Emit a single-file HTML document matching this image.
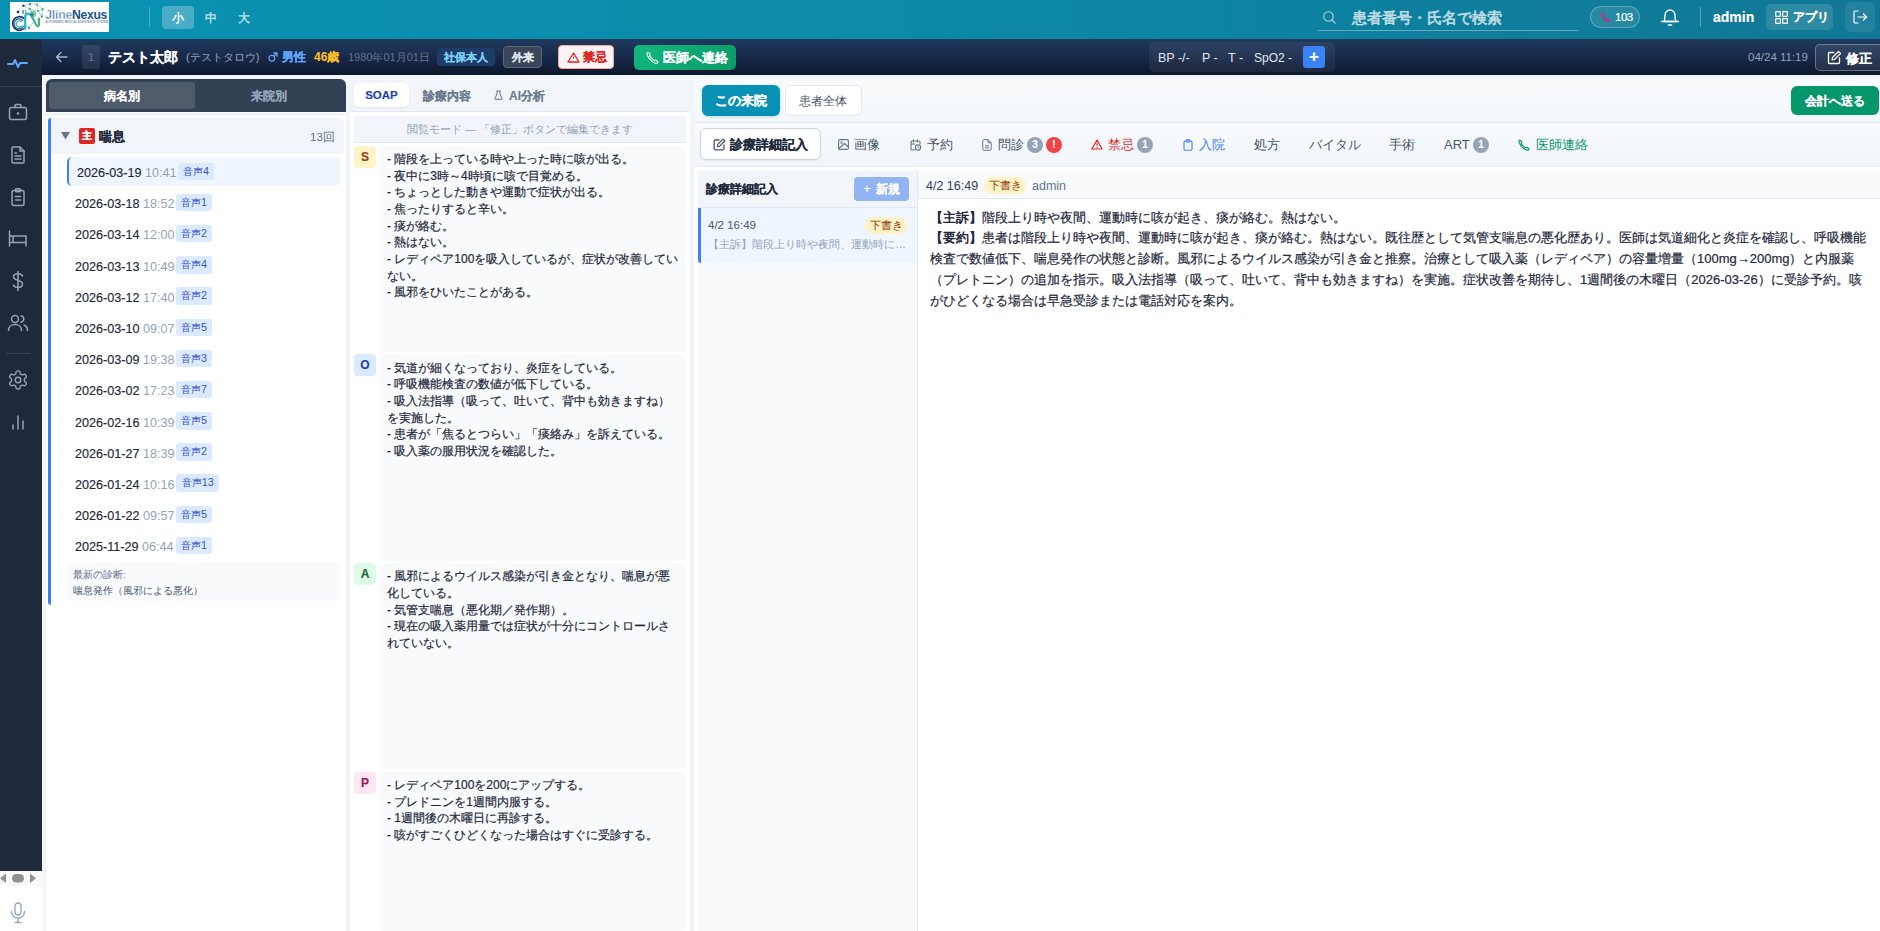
<!DOCTYPE html>
<html><head><meta charset="utf-8">
<style>
*{box-sizing:border-box;margin:0;padding:0}
html,body{width:1880px;height:931px;overflow:hidden;background:#f1f5f9;font-family:"Liberation Sans",sans-serif;color:#1e293b}
.a{position:absolute}
.nw{white-space:nowrap}
svg{display:block}
[style*="font-weight:bold"]{-webkit-text-stroke-width:.12px}
/* header */
#hdr{position:absolute;left:0;top:0;width:1880px;height:39px;background:linear-gradient(90deg,#0a92b2 0%,#0c89a8 50%,#117795 100%)}
.fs{top:6px;height:23px;width:32px;border-radius:4px;color:rgba(255,255,255,.72);font-weight:bold;font-size:12px;line-height:24px;text-align:center}
/* patient bar */
#pbar{position:absolute;left:42px;top:39px;width:1838px;height:36px;background:linear-gradient(180deg,#203a5c 0%,#18294a 50%,#0e182c 100%)}
#side{position:absolute;left:0;top:39px;width:42px;height:832px;background:#1e293b}
.ico{position:absolute;left:0;width:36px;height:24px;display:flex;justify-content:center;align-items:center}
.ico svg{stroke:#94a3b8;fill:none;stroke-width:1.5;stroke-linecap:round;stroke-linejoin:round}
</style></head><body>
<!-- ============ HEADER ============ -->
<div id="hdr">
  <div class="a" style="left:10px;top:2px;width:99px;height:30px;background:#fff">
    <svg width="99" height="30" viewBox="0 0 99 30">
      <defs><linearGradient id="ng" x1="0" y1="0" x2="1" y2="0"><stop offset="0" stop-color="#22b5d0"/><stop offset="1" stop-color="#4cb27a"/></linearGradient>
      <linearGradient id="tg" x1="0" y1="0" x2="1" y2="0"><stop offset="0" stop-color="#3e74ad"/><stop offset="1" stop-color="#7da3c8"/></linearGradient></defs>
      <g fill="none" stroke-linecap="round">
        <path d="M8 10 L13.4 3.8 L20 1.7 L27 2.4 L32.7 7.2 L32 14.5 L28 9 L19.6 6.9 L13.4 3.8 M20 1.7 L19.6 6.9 L23 12 M27 2.4 L28 9 L32.7 7.2 M28 9 L32 14.5 L27 18 M19 25.8 L23 21" stroke="#6fb3a8" stroke-width=".5"/>
        <path d="M14.2 16.6 A6.8 6.8 0 1 0 15.6 24.5" stroke="#1a3a78" stroke-width="1.7"/>
        <path d="M12.6 18.3 A5 5 0 1 0 13.6 24" stroke="#2d5590" stroke-width="1.1"/>
        <path d="M11.2 19.6 A3.1 3.1 0 1 0 11.8 24" stroke="#3bb8b0" stroke-width="1.3"/>
        <path d="M15.2 27 L15.2 15 C15.2 11 19.5 10.5 21.5 14 L26 22.5 C27.5 25.5 29 25 29 22 L29 16.5" stroke="url(#ng)" stroke-width="2.2"/>
        <path d="M13 8 L13 11.5" stroke="#3d5fa8" stroke-width="1.2"/>
        <path d="M15.8 8 L15.8 11.5" stroke="#5ab87a" stroke-width="1.2"/>
      </g>
      <circle cx="23" cy="12" r="3.4" fill="#5ab090" opacity=".7"/><circle cx="22" cy="12.8" r="1.7" fill="#2a6a8a" opacity=".75"/>
      <circle cx="8" cy="10" r="1.3" fill="#0f2a5f"/><circle cx="13.4" cy="3.8" r="1.3" fill="#1f4f86"/><circle cx="20" cy="1.9" r="1" fill="#2f7f9a"/><circle cx="27" cy="2.6" r="1" fill="#4aa87a"/><circle cx="32.7" cy="7.2" r="1.2" fill="#5ab87a"/><circle cx="32" cy="14.5" r="1.1" fill="#3a9a7a"/><circle cx="19" cy="25.8" r="1.1" fill="#1f6f8a"/><circle cx="19.6" cy="6.9" r="1" fill="#2a8aa0"/><circle cx="28" cy="9" r=".9" fill="#4aa88a"/>
      <text x="35.3" y="16.7" font-family="Liberation Sans" font-size="12.2"><tspan fill="url(#tg)" font-weight="bold" stroke="#fff" stroke-width=".35" letter-spacing="-.2">Jline</tspan><tspan fill="#1d4f91" font-weight="bold" letter-spacing="-.35">Nexus</tspan></text>
      <text x="35.5" y="20.9" font-family="Liberation Sans" font-size="3.3" font-weight="bold" fill="#5a78a0" opacity=".8" textLength="62.5" lengthAdjust="spacingAndGlyphs">AI-POWERED MEDICAL ASSISTANCE SYSTEM</text>
    </svg>
  </div>
  <div class="a" style="left:149px;top:7px;width:1px;height:20px;background:rgba(255,255,255,.28)"></div>
  <div class="a fs" style="left:162px;background:rgba(255,255,255,.25);color:#fff">小</div>
  <div class="a fs" style="left:195px">中</div>
  <div class="a fs" style="left:228px">大</div>
  <!-- search -->
  <svg class="a" style="left:1322px;top:10px" width="15" height="15" viewBox="0 0 15 15"><circle cx="6.5" cy="6.5" r="4.8" fill="none" stroke="rgba(255,255,255,.65)" stroke-width="1.1"/><path d="M10 10 L13.2 13.2" stroke="rgba(255,255,255,.65)" stroke-width="1.2" stroke-linecap="round"/></svg>
  <div class="a nw" style="left:1352px;top:7.5px;font-size:15px;line-height:20px;color:rgba(255,255,255,.5);font-weight:bold">患者番号・氏名で検索</div>
  <div class="a" style="left:1318px;top:30px;width:260px;height:1px;background:rgba(255,255,255,.35)"></div>
  <!-- pill -->
  <div class="a" style="left:1590px;top:6px;width:50px;height:22px;border-radius:11px;background:rgba(255,255,255,.1);border:1px solid rgba(255,255,255,.25)"></div>
  <svg class="a" style="left:1600px;top:12px" width="12" height="11" viewBox="0 0 12 11"><path d="M1.5 1.5 C1 5 5 9.5 10 10 L11 8.5 L8.5 6.8 L7.3 7.6 C5.5 6.8 4.2 5.5 3.5 3.8 L4.3 2.6 L2.8 .5 Z" fill="#db2777"/></svg>
  <div class="a nw" style="left:1615px;top:8px;font-size:11.5px;line-height:18px;color:#fff;letter-spacing:-.5px;-webkit-text-stroke:.2px #fff">103</div>
  <!-- bell -->
  <svg class="a" style="left:1660px;top:7px" width="20" height="20" viewBox="0 0 20 20"><path d="M4 14.5 C5 13 5 11 5 8.5 C5 5.5 7 3 10 3 C13 3 15 5.5 15 8.5 C15 11 15 13 16 14.5 Z" fill="none" stroke="#fff" stroke-width="1.4" stroke-linejoin="round"/><path d="M1.5 14.5 L18.5 14.5" stroke="#fff" stroke-width="1.4" stroke-linecap="round"/><path d="M8.5 18 L11.5 18" stroke="#fff" stroke-width="1.6" stroke-linecap="round"/></svg>
  <div class="a" style="left:1700px;top:7px;width:1px;height:20px;background:rgba(255,255,255,.3)"></div>
  <div class="a nw" style="left:1713px;top:7px;font-size:14px;line-height:20px;color:#fff;font-weight:bold">admin</div>
  <div class="a" style="left:1766px;top:4px;width:67px;height:26px;border-radius:5px;background:rgba(255,255,255,.13)"></div>
  <svg class="a" style="left:1775px;top:11px" width="13" height="13" viewBox="0 0 13 13"><g fill="none" stroke="#fff" stroke-width="1.2"><rect x=".7" y=".7" width="4.6" height="4.6" rx=".3"/><rect x="7.7" y=".7" width="4.6" height="4.6" rx=".3"/><rect x=".7" y="7.7" width="4.6" height="4.6" rx=".3"/><rect x="7.7" y="7.7" width="4.6" height="4.6" rx=".3"/></g></svg>
  <div class="a nw" style="left:1793px;top:8px;font-size:11.5px;line-height:18px;color:#fff;font-weight:bold">アプリ</div>
  <div class="a" style="left:1845px;top:2px;width:30px;height:30px;border-radius:5px;background:rgba(255,255,255,.08)"></div>
  <svg class="a" style="left:1853px;top:10px" width="15" height="14" viewBox="0 0 15 14"><path d="M5 1 L2 1 C1.4 1 1 1.4 1 2 L1 12 C1 12.6 1.4 13 2 13 L5 13" fill="none" stroke="#fff" stroke-width="1.2" stroke-linecap="round"/><path d="M5 7 L13.5 7 M10.5 4 L13.5 7 L10.5 10" fill="none" stroke="#fff" stroke-width="1.2" stroke-linecap="round" stroke-linejoin="round"/></svg>
</div>

<!-- ============ SIDEBAR ============ -->
<div id="side">
  <div class="ico" style="top:11px"><svg width="22" height="12" viewBox="0 0 22 12" style="stroke:#60a5fa;stroke-width:2"><path d="M1 8 L6 8 L8 4 L11 11 L13 7 L20 7"/></svg></div>
  <div class="a" style="left:0;top:47px;width:42px;height:1px;background:#334155"></div>
  <div class="ico" style="top:61px"><svg width="20" height="20" viewBox="0 0 20 20"><rect x="1.5" y="5.5" width="17" height="12" rx="2"/><path d="M7 5.5 L7 3.5 C7 2.9 7.4 2.5 8 2.5 L12 2.5 C12.6 2.5 13 2.9 13 3.5 L13 5.5"/><circle cx="10" cy="11.5" r=".6" style="fill:#94a3b8"/></svg></div>
  <div class="ico" style="top:104px"><svg width="20" height="20" viewBox="0 0 20 20"><path d="M4.5 2 L12 2 L16 6 L16 17 C16 17.6 15.6 18 15 18 L5 18 C4.4 18 4 17.6 4 17 L4 2.5 Z"/><path d="M12 2 L12 6 L16 6"/><path d="M7 11 L13 11 M7 14 L13 14 M7 8 L8.5 8"/></svg></div>
  <div class="ico" style="top:146px"><svg width="20" height="20" viewBox="0 0 20 20"><rect x="4" y="3.5" width="12" height="15" rx="2"/><rect x="7.5" y="1.8" width="5" height="3" rx=".8"/><path d="M7.5 9.5 L12.5 9.5 M7.5 13 L12.5 13"/></svg></div>
  <div class="ico" style="top:188px"><svg width="20" height="18" viewBox="0 0 20 18"><path d="M1.5 1 L1.5 16 M1.5 6 L18 6 L18 16 M1.5 12.5 L18 12.5 M5 6 L5 12.5"/></svg></div>
  <div class="ico" style="top:230px"><svg width="14" height="22" viewBox="0 0 14 22"><path d="M7 1.5 L7 20.5 M11.5 6 C11 4.5 9.5 3.8 7 3.8 C4 3.8 2.5 5 2.5 7 C2.5 11 11.5 9.5 11.5 14 C11.5 16.2 9.8 17.5 7 17.5 C4.5 17.5 3 16.8 2.5 15"/></svg></div>
  <div class="ico" style="top:272px"><svg width="22" height="18" viewBox="0 0 22 18"><circle cx="8" cy="5" r="3.5"/><path d="M1.5 16.5 C1.5 12.5 4.5 10.5 8 10.5 C11.5 10.5 14.5 12.5 14.5 16.5"/><path d="M14 1.8 C15.8 2.3 16.8 3.6 16.8 5 C16.8 6.4 15.8 7.7 14 8.2 M17 11 C19 11.8 20.5 13.5 20.5 16.5"/></svg></div>
  <div class="a" style="left:6px;top:314px;width:24px;height:1px;background:#334155"></div>
  <div class="ico" style="top:329px"><svg width="22" height="22" viewBox="0 0 24 24"><path d="M12.22 2h-.44a2 2 0 0 0-2 2v.18a2 2 0 0 1-1 1.73l-.43.25a2 2 0 0 1-2 0l-.15-.08a2 2 0 0 0-2.73.73l-.22.38a2 2 0 0 0 .73 2.73l.15.1a2 2 0 0 1 1 1.72v.51a2 2 0 0 1-1 1.74l-.15.09a2 2 0 0 0-.73 2.73l.22.38a2 2 0 0 0 2.73.73l.15-.08a2 2 0 0 1 2 0l.43.25a2 2 0 0 1 1 1.73V20a2 2 0 0 0 2 2h.44a2 2 0 0 0 2-2v-.18a2 2 0 0 1 1-1.73l.43-.25a2 2 0 0 1 2 0l.15.08a2 2 0 0 0 2.73-.73l.22-.39a2 2 0 0 0-.73-2.73l-.15-.08a2 2 0 0 1-1-1.74v-.5a2 2 0 0 1 1-1.74l.15-.09a2 2 0 0 0 .73-2.73l-.22-.38a2 2 0 0 0-2.73-.73l-.15.08a2 2 0 0 1-2 0l-.43-.25a2 2 0 0 1-1-1.73V4a2 2 0 0 0-2-2z"/><circle cx="12" cy="12" r="3"/></svg></div>
  <div class="ico" style="top:371px"><svg width="16" height="16" viewBox="0 0 16 16"><path d="M3 15 L3 11 M8 15 L8 2 M13 15 L13 7"/></svg></div>
</div>
<!-- scrollbar + mic -->
<div class="a" style="left:0;top:871px;width:42px;height:15px;background:#f8f8f8"></div>
<svg class="a" style="left:0;top:873px" width="42" height="11" viewBox="0 0 42 11"><path d="M6 .5 L6 10 L0 5.3 Z" fill="#8f8f8f"/><rect x="12" y="1" width="12" height="8.5" rx="4.25" fill="#8f8f8f"/><path d="M30 .5 L30 10 L36 5.3 Z" fill="#8f8f8f"/></svg>
<div class="a" style="left:0;top:886px;width:42px;height:45px;background:#fff"></div>
<svg class="a" style="left:10px;top:902px" width="16" height="22" viewBox="0 0 16 22"><rect x="5" y="1" width="6" height="12" rx="3" fill="none" stroke="#94a3b8" stroke-width="1.3"/><path d="M1.5 9.5 C1.5 13.5 4.5 16 8 16 C11.5 16 14.5 13.5 14.5 9.5 M8 16 L8 20.5 M5 20.5 L11 20.5" fill="none" stroke="#94a3b8" stroke-width="1.3" stroke-linecap="round"/></svg>

<!-- ============ PATIENT BAR ============ -->
<div id="pbar">
  <svg class="a" style="left:13px;top:12px" width="13" height="12" viewBox="0 0 13 12"><path d="M12 6 L1.5 6 M6 1.5 L1.5 6 L6 10.5" fill="none" stroke="#a8b4c6" stroke-width="1.4" stroke-linecap="round" stroke-linejoin="round"/></svg>
  <div class="a" style="left:40px;top:6px;width:18px;height:24px;border-radius:3px;background:rgba(255,255,255,.09);color:#64748b;font-size:11px;line-height:24px;text-align:center">1</div>
  <div class="a nw" style="left:66px;top:8px;font-size:14px;line-height:20px;color:#fff;font-weight:bold">テスト太郎</div>
  <div class="a nw" style="left:144px;top:10px;font-size:11px;line-height:16px;color:#94a3b8">(テストタロウ)</div>
  <svg class="a" style="left:226px;top:13px" width="10" height="10" viewBox="0 0 10 10"><circle cx="3.8" cy="6.2" r="2.9" fill="none" stroke="#60a5fa" stroke-width="1.3"/><path d="M5.9 4.1 L9 1 M5.8 1 L9 1 L9 4.2" fill="none" stroke="#60a5fa" stroke-width="1.3" stroke-linecap="round" stroke-linejoin="round"/></svg><div class="a nw" style="left:240px;top:10px;font-size:12px;line-height:16px;color:#60a5fa;font-weight:bold">男性</div>
  <div class="a nw" style="left:272px;top:10px;font-size:12px;line-height:16px;color:#fbbf24;font-weight:bold">46歳</div>
  <div class="a nw" style="left:306px;top:11px;font-size:11px;line-height:15px;color:#64748b">1980年01月01日</div>
  <div class="a nw" style="left:395px;top:9px;width:58px;height:18px;border-radius:4px;background:#1e3d66;color:#7dd3fc;font-size:11px;line-height:18px;text-align:center;font-weight:bold">社保本人</div>
  <div class="a nw" style="left:461px;top:7px;width:39px;height:22px;border-radius:4px;background:#3a475a;border:1px solid #5b6678;color:#e2e8f0;font-size:11px;line-height:20px;text-align:center;font-weight:bold">外来</div>
  <div class="a" style="left:516px;top:6px;width:56px;height:24px;border-radius:4px;background:#fef2f2;border:1px solid #fca5a5"></div>
  <svg class="a" style="left:525px;top:13px" width="13" height="11" viewBox="0 0 13 11"><path d="M6.5 1 L12 10 L1 10 Z" fill="none" stroke="#dc2626" stroke-width="1.3" stroke-linejoin="round"/><path d="M6.5 4.5 L6.5 6.5" stroke="#dc2626" stroke-width="1.1"/></svg>
  <div class="a nw" style="left:541px;top:10px;font-size:12px;line-height:16px;color:#dc2626;font-weight:bold">禁忌</div>
  <div class="a" style="left:592px;top:6px;width:102px;height:25px;border-radius:5px;background:linear-gradient(135deg,#12b87f,#0a9a68)"></div>
  <svg class="a" style="left:604px;top:12px" width="13" height="13" viewBox="0 0 13 13"><path d="M2 1.2 C1 1.5 .8 2.8 1.5 4.5 C3 8 5.5 10.5 9 12 C10.5 12.5 11.5 12.3 12 11.2 L10 9 L8.4 9.6 C6.5 8.6 4.6 6.6 3.6 4.8 L4.2 3.2 Z" fill="none" stroke="#fff" stroke-width="1.1" stroke-linejoin="round"/></svg>
  <div class="a nw" style="left:621px;top:10px;font-size:13px;line-height:18px;color:#fff;font-weight:bold">医師へ連絡</div>
  <!-- vitals -->
  <div class="a" style="left:1107px;top:3px;width:186px;height:30px;border-radius:5px;background:rgba(255,255,255,.06)"></div>
  <div class="a nw" style="left:1116px;top:11px;font-size:12.5px;line-height:16px;color:#e2e8f0">BP -/-</div>
  <div class="a nw" style="left:1160px;top:11px;font-size:12.5px;line-height:16px;color:#e2e8f0">P -</div>
  <div class="a nw" style="left:1186px;top:11px;font-size:12.5px;line-height:16px;color:#e2e8f0">T -</div>
  <div class="a nw" style="left:1212px;top:11px;font-size:12px;line-height:16px;color:#e2e8f0">SpO2 -</div>
  <div class="a" style="left:1261px;top:7px;width:22px;height:22px;border-radius:3px;background:#3b82f6;color:#fff;font-size:17px;line-height:21px;text-align:center;font-weight:bold">+</div>
  <div class="a nw" style="left:1706px;top:11px;font-size:11.5px;line-height:15px;color:#94a3b8">04/24 11:19</div>
  <div class="a" style="left:1773px;top:5px;width:70px;height:27px;border-radius:5px;background:rgba(255,255,255,.09);border:1px solid rgba(255,255,255,.3)"></div>
  <svg class="a" style="left:1785px;top:11px" width="15" height="15" viewBox="0 0 15 15"><path d="M7 2.5 L2.5 2.5 C1.9 2.5 1.5 2.9 1.5 3.5 L1.5 12.5 C1.5 13.1 1.9 13.5 2.5 13.5 L11.5 13.5 C12.1 13.5 12.5 13.1 12.5 12.5 L12.5 8" fill="none" stroke="#fff" stroke-width="1.3" stroke-linecap="round"/><path d="M11.5 1.5 L13.5 3.5 L7.5 9.5 L5 10 L5.5 7.5 Z" fill="none" stroke="#fff" stroke-width="1.2" stroke-linejoin="round"/></svg>
  <div class="a nw" style="left:1804px;top:11px;font-size:13px;line-height:18px;color:#fff;font-weight:bold">修正</div>
</div>
<!-- ============ LEFT PANEL ============ -->
<div class="a" style="left:42px;top:75px;width:1px;height:856px;background:#fafbfc"></div>
<div class="a" style="left:46px;top:79px;width:300px;height:33px;background:#334155;border-radius:6px 6px 0 0"></div>
<div class="a" style="left:49px;top:82px;width:146px;height:27px;background:#4f5a6b;border-radius:4px;color:#fff;font-weight:bold;font-size:12px;line-height:29px;text-align:center">病名別</div>
<div class="a" style="left:196px;top:82px;width:146px;height:27px;color:#94a3b8;font-weight:bold;font-size:12px;line-height:29px;text-align:center">来院別</div>
<div class="a" style="left:46px;top:112px;width:300px;height:1px;background:#fff"></div>
<div class="a" style="left:46px;top:116px;width:300px;height:815px;background:#fff"></div>
<div class="a" style="left:48px;top:118px;width:3px;height:487px;background:#3b82f6;border-radius:6px 0 0 6px"></div>
<div class="a" style="left:51px;top:118px;width:293px;height:36px;background:#f1f5f9;border-radius:0 6px 0 0"></div>
<svg class="a" style="left:61px;top:132px" width="9" height="8" viewBox="0 0 9 8"><path d="M0 0 L9 0 L4.5 7.5 Z" fill="#64748b"/></svg>
<div class="a" style="left:79px;top:128px;width:16px;height:16px;background:#dc2626;border-radius:2px;color:#fff;font-size:10px;font-weight:bold;line-height:16px;text-align:center">主</div>
<div class="a nw" style="left:99px;top:128px;font-size:13px;line-height:18px;color:#1e293b;font-weight:bold">喘息</div>
<div class="a nw" style="left:310px;top:129px;font-size:11.5px;line-height:16px;color:#64748b">13回</div>
<div class="a" style="left:67px;top:157px;width:273px;height:28.5px;background:#eff6ff;border-left:2.5px solid #3b82f6;border-radius:5px"></div>
<div class="a nw" style="left:77px;top:164.1px;font-size:12.6px;line-height:18px;color:#1e293b;-webkit-text-stroke:.15px #1e293b">2026-03-19 <span style="color:#94a3b8;-webkit-text-stroke:0">10:41</span></div>
<div class="a nw" style="left:178.3px;top:162.6px;width:35.5px;height:17.5px;background:#dbeafe;border-radius:3px;color:#3a55c9;font-size:9.8px;line-height:17.5px;text-align:center">音声<span style="font-size:10.8px">4</span></div>
<div class="a nw" style="left:75px;top:195.3px;font-size:12.6px;line-height:18px;color:#1e293b;-webkit-text-stroke:.15px #1e293b">2026-03-18 <span style="color:#94a3b8;-webkit-text-stroke:0">18:52</span></div>
<div class="a nw" style="left:176.3px;top:193.8px;width:35.5px;height:17.5px;background:#dbeafe;border-radius:3px;color:#3a55c9;font-size:9.8px;line-height:17.5px;text-align:center">音声<span style="font-size:10.8px">1</span></div>
<div class="a nw" style="left:75px;top:226.4px;font-size:12.6px;line-height:18px;color:#1e293b;-webkit-text-stroke:.15px #1e293b">2026-03-14 <span style="color:#94a3b8;-webkit-text-stroke:0">12:00</span></div>
<div class="a nw" style="left:176.3px;top:224.9px;width:35.5px;height:17.5px;background:#dbeafe;border-radius:3px;color:#3a55c9;font-size:9.8px;line-height:17.5px;text-align:center">音声<span style="font-size:10.8px">2</span></div>
<div class="a nw" style="left:75px;top:257.6px;font-size:12.6px;line-height:18px;color:#1e293b;-webkit-text-stroke:.15px #1e293b">2026-03-13 <span style="color:#94a3b8;-webkit-text-stroke:0">10:49</span></div>
<div class="a nw" style="left:176.3px;top:256.1px;width:35.5px;height:17.5px;background:#dbeafe;border-radius:3px;color:#3a55c9;font-size:9.8px;line-height:17.5px;text-align:center">音声<span style="font-size:10.8px">4</span></div>
<div class="a nw" style="left:75px;top:288.8px;font-size:12.6px;line-height:18px;color:#1e293b;-webkit-text-stroke:.15px #1e293b">2026-03-12 <span style="color:#94a3b8;-webkit-text-stroke:0">17:40</span></div>
<div class="a nw" style="left:176.3px;top:287.3px;width:35.5px;height:17.5px;background:#dbeafe;border-radius:3px;color:#3a55c9;font-size:9.8px;line-height:17.5px;text-align:center">音声<span style="font-size:10.8px">2</span></div>
<div class="a nw" style="left:75px;top:320.0px;font-size:12.6px;line-height:18px;color:#1e293b;-webkit-text-stroke:.15px #1e293b">2026-03-10 <span style="color:#94a3b8;-webkit-text-stroke:0">09:07</span></div>
<div class="a nw" style="left:176.3px;top:318.5px;width:35.5px;height:17.5px;background:#dbeafe;border-radius:3px;color:#3a55c9;font-size:9.8px;line-height:17.5px;text-align:center">音声<span style="font-size:10.8px">5</span></div>
<div class="a nw" style="left:75px;top:351.1px;font-size:12.6px;line-height:18px;color:#1e293b;-webkit-text-stroke:.15px #1e293b">2026-03-09 <span style="color:#94a3b8;-webkit-text-stroke:0">19:38</span></div>
<div class="a nw" style="left:176.3px;top:349.6px;width:35.5px;height:17.5px;background:#dbeafe;border-radius:3px;color:#3a55c9;font-size:9.8px;line-height:17.5px;text-align:center">音声<span style="font-size:10.8px">3</span></div>
<div class="a nw" style="left:75px;top:382.3px;font-size:12.6px;line-height:18px;color:#1e293b;-webkit-text-stroke:.15px #1e293b">2026-03-02 <span style="color:#94a3b8;-webkit-text-stroke:0">17:23</span></div>
<div class="a nw" style="left:176.3px;top:380.8px;width:35.5px;height:17.5px;background:#dbeafe;border-radius:3px;color:#3a55c9;font-size:9.8px;line-height:17.5px;text-align:center">音声<span style="font-size:10.8px">7</span></div>
<div class="a nw" style="left:75px;top:413.5px;font-size:12.6px;line-height:18px;color:#1e293b;-webkit-text-stroke:.15px #1e293b">2026-02-16 <span style="color:#94a3b8;-webkit-text-stroke:0">10:39</span></div>
<div class="a nw" style="left:176.3px;top:412.0px;width:35.5px;height:17.5px;background:#dbeafe;border-radius:3px;color:#3a55c9;font-size:9.8px;line-height:17.5px;text-align:center">音声<span style="font-size:10.8px">5</span></div>
<div class="a nw" style="left:75px;top:444.6px;font-size:12.6px;line-height:18px;color:#1e293b;-webkit-text-stroke:.15px #1e293b">2026-01-27 <span style="color:#94a3b8;-webkit-text-stroke:0">18:39</span></div>
<div class="a nw" style="left:176.3px;top:443.1px;width:35.5px;height:17.5px;background:#dbeafe;border-radius:3px;color:#3a55c9;font-size:9.8px;line-height:17.5px;text-align:center">音声<span style="font-size:10.8px">2</span></div>
<div class="a nw" style="left:75px;top:475.8px;font-size:12.6px;line-height:18px;color:#1e293b;-webkit-text-stroke:.15px #1e293b">2026-01-24 <span style="color:#94a3b8;-webkit-text-stroke:0">10:16</span></div>
<div class="a nw" style="left:176.3px;top:474.3px;width:43px;height:17.5px;background:#dbeafe;border-radius:3px;color:#3a55c9;font-size:9.8px;line-height:17.5px;text-align:center">音声<span style="font-size:10.8px">13</span></div>
<div class="a nw" style="left:75px;top:507.0px;font-size:12.6px;line-height:18px;color:#1e293b;-webkit-text-stroke:.15px #1e293b">2026-01-22 <span style="color:#94a3b8;-webkit-text-stroke:0">09:57</span></div>
<div class="a nw" style="left:176.3px;top:505.5px;width:35.5px;height:17.5px;background:#dbeafe;border-radius:3px;color:#3a55c9;font-size:9.8px;line-height:17.5px;text-align:center">音声<span style="font-size:10.8px">5</span></div>
<div class="a nw" style="left:75px;top:538.1px;font-size:12.6px;line-height:18px;color:#1e293b;-webkit-text-stroke:.15px #1e293b">2025-11-29 <span style="color:#94a3b8;-webkit-text-stroke:0">06:44</span></div>
<div class="a nw" style="left:176.3px;top:536.6px;width:35.5px;height:17.5px;background:#dbeafe;border-radius:3px;color:#3a55c9;font-size:9.8px;line-height:17.5px;text-align:center">音声<span style="font-size:10.8px">1</span></div>
<div class="a" style="left:67px;top:562px;width:273px;height:39px;background:#f8fafc;border-radius:4px"></div>
<div class="a nw" style="left:73px;top:567px;font-size:9.8px;line-height:15px;color:#64748b">最新の診断:</div>
<div class="a nw" style="left:73px;top:582.5px;font-size:9.7px;line-height:15px;color:#475569">喘息発作（風邪による悪化）</div>

<!-- ============ SOAP PANEL ============ -->
<div class="a" style="left:350px;top:79px;width:340px;height:33px;background:#f1f5f9;border-radius:6px 6px 0 0"></div>
<div class="a" style="left:350px;top:111px;width:340px;height:1px;background:#e2e8f0"></div>
<div class="a" style="left:354px;top:83px;width:55px;height:24px;background:#fff;border-radius:5px;box-shadow:0 1px 2px rgba(0,0,0,.08);color:#1e40af;font-weight:bold;font-size:11.5px;line-height:25px;text-align:center">SOAP</div>
<div class="a nw" style="left:423px;top:88px;font-size:12px;line-height:17px;color:#6b7a8f;font-weight:bold">診療内容</div>
<svg class="a" style="left:494px;top:90px" width="9" height="10" viewBox="0 0 9 10"><path d="M3 1 L3 4 L.8 8.6 C.6 9 .8 9.3 1.2 9.3 L7.8 9.3 C8.2 9.3 8.4 9 8.2 8.6 L6 4 L6 1 M2.2 1 L6.8 1" fill="none" stroke="#64748b" stroke-width="1" stroke-linejoin="round"/></svg>
<div class="a nw" style="left:509px;top:88px;font-size:12px;line-height:17px;color:#6b7a8f;font-weight:bold">AI分析</div>
<div class="a" style="left:350px;top:112px;width:340px;height:819px;background:#fff"></div>
<div class="a" style="left:354px;top:116px;width:332px;height:27px;background:#f1f5f9;border-bottom:1px solid #e2e8f0;color:#94a3b8;font-size:11px;line-height:26px;text-align:center">閲覧モード — 「修正」ボタンで編集できます</div>
<div class="a" style="left:354px;top:145.5px;width:22px;height:22px;background:#fef3c7;border-radius:4px;color:#92400e;font-weight:bold;font-size:12px;line-height:22px;text-align:center">S</div>
<div class="a" style="left:380px;top:145.5px;width:306px;height:206.5px;background:#f8fafc;border-radius:5px"></div>
<div class="a nw" style="left:387px;top:150.8px;font-size:12px;line-height:16.7px;color:#1e293b;-webkit-text-stroke:.2px #1e293b">- 階段を上っている時や上った時に咳が出る。<br>- 夜中に3時～4時頃に咳で目覚める。<br>- ちょっとした動きや運動で症状が出る。<br>- 焦ったりすると辛い。<br>- 痰が絡む。<br>- 熱はない。<br>- レディペア100を吸入しているが、症状が改善してい<br>ない。<br>- 風邪をひいたことがある。</div>
<div class="a" style="left:354px;top:354.2px;width:22px;height:22px;background:#dbeafe;border-radius:4px;color:#1e40af;font-weight:bold;font-size:12px;line-height:22px;text-align:center">O</div>
<div class="a" style="left:380px;top:354.2px;width:306px;height:206.5px;background:#f8fafc;border-radius:5px"></div>
<div class="a nw" style="left:387px;top:359.5px;font-size:12px;line-height:16.7px;color:#1e293b;-webkit-text-stroke:.2px #1e293b">- 気道が細くなっており、炎症をしている。<br>- 呼吸機能検査の数値が低下している。<br>- 吸入法指導（吸って、吐いて、背中も効きますね）<br>を実施した。<br>- 患者が「焦るとつらい」「痰絡み」を訴えている。<br>- 吸入薬の服用状況を確認した。</div>
<div class="a" style="left:354px;top:562.9px;width:22px;height:22px;background:#dcfce7;border-radius:4px;color:#166534;font-weight:bold;font-size:12px;line-height:22px;text-align:center">A</div>
<div class="a" style="left:380px;top:562.9px;width:306px;height:206.5px;background:#f8fafc;border-radius:5px"></div>
<div class="a nw" style="left:387px;top:568.2px;font-size:12px;line-height:16.7px;color:#1e293b;-webkit-text-stroke:.2px #1e293b">- 風邪によるウイルス感染が引き金となり、喘息が悪<br>化している。<br>- 気管支喘息（悪化期／発作期）。<br>- 現在の吸入薬用量では症状が十分にコントロールさ<br>れていない。</div>
<div class="a" style="left:354px;top:771.6px;width:22px;height:22px;background:#fce7f3;border-radius:4px;color:#9d174d;font-weight:bold;font-size:12px;line-height:22px;text-align:center">P</div>
<div class="a" style="left:380px;top:771.6px;width:306px;height:159.39999999999998px;background:#f8fafc;border-radius:5px"></div>
<div class="a nw" style="left:387px;top:776.9px;font-size:12px;line-height:16.7px;color:#1e293b;-webkit-text-stroke:.2px #1e293b">- レディペア100を200にアップする。<br>- プレドニンを1週間内服する。<br>- 1週間後の木曜日に再診する。<br>- 咳がすごくひどくなった場合はすぐに受診する。</div>

<!-- ============ RIGHT PANEL ============ -->
<div class="a" style="left:694px;top:79px;width:1186px;height:852px;background:linear-gradient(180deg,#f8fafc 0%,#f1f5f9 90px,#f1f5f9 100%);border-radius:6px 0 0 0"></div>
<div class="a" style="left:702px;top:85px;width:78px;height:31px;background:#0891b2;border-radius:6px;box-shadow:0 1px 3px rgba(8,145,178,.3);color:#fff;font-weight:bold;font-size:12.5px;line-height:33px;text-align:center">この来院</div>
<div class="a" style="left:785px;top:85px;width:76.5px;height:30.5px;background:#fff;border:1px solid #e2e8f0;border-radius:6px;color:#475569;font-size:12px;line-height:30.5px;text-align:center">患者全体</div>
<div class="a" style="left:1791px;top:86px;width:88px;height:29px;background:#059669;border-radius:6px;color:#fff;font-weight:bold;font-size:12px;line-height:31px;text-align:center">会計へ送る</div>
<div class="a" style="left:694px;top:122px;width:1186px;height:1px;background:#e2e8f0"></div>
<div class="a" style="left:694px;top:123px;width:1186px;height:44px;background:linear-gradient(180deg,#f8fafc,#f1f5f9)"></div>
<div class="a" style="left:694px;top:166px;width:1186px;height:1px;background:#e2e8f0"></div>
<!-- tabs -->
<div class="a" style="left:700px;top:128px;width:120.5px;height:32px;background:#fff;border:1px solid #cbd5e1;border-radius:6px;box-shadow:0 1px 2px rgba(0,0,0,.06)"></div>
<svg class="a" style="left:713px;top:138px" width="13" height="13" viewBox="0 0 13 13"><path d="M6 2 L2.2 2 C1.6 2 1.2 2.4 1.2 3 L1.2 10.8 C1.2 11.4 1.6 11.8 2.2 11.8 L10 11.8 C10.6 11.8 11 11.4 11 10.8 L11 7" fill="none" stroke="#475569" stroke-width="1.3" stroke-linecap="round"/><path d="M10 1.2 L11.8 3 L6.5 8.3 L4.3 8.7 L4.7 6.5 Z" fill="none" stroke="#475569" stroke-width="1.2" stroke-linejoin="round"/></svg>
<div class="a nw" style="left:730px;top:136px;font-size:13px;line-height:18px;color:#1e293b;font-weight:bold">診療詳細記入</div>
<svg class="a" style="left:838px;top:139px" width="11" height="11" viewBox="0 0 11 11"><rect x=".6" y=".6" width="9.8" height="9.8" rx="1.2" fill="none" stroke="#64748b" stroke-width="1.1"/><circle cx="3.6" cy="3.6" r="1" fill="none" stroke="#64748b" stroke-width=".9"/><path d="M.8 9.5 L6.5 4.5 L10.4 8" fill="none" stroke="#64748b" stroke-width="1.1"/></svg>
<div class="a nw" style="left:854px;top:136px;font-size:13px;line-height:18px;color:#475569">画像</div>
<svg class="a" style="left:910px;top:139px" width="12" height="12" viewBox="0 0 12 12"><path d="M5 11 L2 11 C1.4 11 1 10.6 1 10 L1 3 C1 2.4 1.4 2 2 2 L9 2 C9.6 2 10 2.4 10 3 L10 5 M3.5 .8 L3.5 3 M7.5 .8 L7.5 3 M1 5 L5 5" fill="none" stroke="#64748b" stroke-width="1.1" stroke-linecap="round"/><circle cx="8" cy="8.5" r="2.6" fill="none" stroke="#64748b" stroke-width="1.1"/><path d="M8 7.3 L8 8.6 L8.9 9.2" fill="none" stroke="#64748b" stroke-width=".9"/></svg>
<div class="a nw" style="left:927px;top:136px;font-size:13px;line-height:18px;color:#475569">予約</div>
<svg class="a" style="left:982px;top:139px" width="10" height="12" viewBox="0 0 10 12"><path d="M6.2 .7 L1.8 .7 C1.2 .7 .8 1.1 .8 1.7 L.8 10.3 C.8 10.9 1.2 11.3 1.8 11.3 L8.2 11.3 C8.8 11.3 9.2 10.9 9.2 10.3 L9.2 3.7 Z M6 .8 L6 3.8 L9 3.8 M3 6.8 L7 6.8 M3 8.8 L7 8.8" fill="none" stroke="#64748b" stroke-width="1" stroke-linejoin="round"/></svg>
<div class="a nw" style="left:998px;top:136px;font-size:13px;line-height:18px;color:#475569">問診</div>
<div class="a" style="left:1027px;top:136.5px;width:16px;height:16px;border-radius:8px;background:#94a3b8;color:#fff;font-size:10px;line-height:16px;text-align:center;font-weight:bold">3</div>
<div class="a" style="left:1046px;top:136.5px;width:16px;height:16px;border-radius:8px;background:#ef4444;color:#fff;font-size:10px;line-height:16px;text-align:center;font-weight:bold">!</div>
<svg class="a" style="left:1091px;top:138.5px" width="12" height="11" viewBox="0 0 12 11"><path d="M6 1 L11.2 10 L.8 10 Z" fill="none" stroke="#dc2626" stroke-width="1.2" stroke-linejoin="round"/><path d="M6 4.3 L6 6.6 M6 8.2 L6 8.4" stroke="#dc2626" stroke-width="1.1" stroke-linecap="round"/></svg>
<div class="a nw" style="left:1108px;top:136px;font-size:13px;line-height:18px;color:#dc2626">禁忌</div>
<div class="a" style="left:1137px;top:136.5px;width:16px;height:16px;border-radius:8px;background:#94a3b8;color:#fff;font-size:10px;line-height:16px;text-align:center;font-weight:bold">1</div>
<svg class="a" style="left:1183px;top:138.5px" width="10" height="12" viewBox="0 0 10 12"><rect x="1" y="2" width="8" height="9.3" rx="1.2" fill="none" stroke="#3b82f6" stroke-width="1.1"/><rect x="3" y=".7" width="4" height="2.3" rx=".6" fill="none" stroke="#3b82f6" stroke-width="1"/></svg>
<div class="a nw" style="left:1199px;top:136px;font-size:13px;line-height:18px;color:#3b82f6">入院</div>
<div class="a nw" style="left:1254px;top:136px;font-size:13px;line-height:18px;color:#475569">処方</div>
<div class="a nw" style="left:1309px;top:136px;font-size:13px;line-height:18px;color:#475569">バイタル</div>
<div class="a nw" style="left:1389px;top:136px;font-size:13px;line-height:18px;color:#475569">手術</div>
<div class="a nw" style="left:1444px;top:135.5px;font-size:13px;line-height:18px;color:#475569">ART</div>
<div class="a" style="left:1473px;top:136.5px;width:16px;height:16px;border-radius:8px;background:#94a3b8;color:#fff;font-size:10px;line-height:16px;text-align:center;font-weight:bold">1</div>
<svg class="a" style="left:1518px;top:138.5px" width="12" height="12" viewBox="0 0 12 12"><path d="M1.8 1 C1 1.3 .8 2.5 1.4 4 C2.8 7.3 5 9.5 8.2 10.9 C9.6 11.4 10.6 11.2 11 10.2 L9.2 8.2 L7.7 8.8 C6 7.9 4.2 6 3.3 4.4 L3.9 2.9 Z" fill="none" stroke="#059669" stroke-width="1.1" stroke-linejoin="round"/></svg>
<div class="a nw" style="left:1536px;top:136px;font-size:13px;line-height:18px;color:#059669">医師連絡</div>
<!-- content area -->
<div class="a" style="left:694px;top:167px;width:1186px;height:764px;background:#fff"></div>
<div class="a" style="left:698px;top:171px;width:220px;height:760px;background:#f8fafc;border-right:1px solid #e2e8f0"></div>
<div class="a" style="left:698px;top:171px;width:219px;height:36.5px;background:#f1f5f9;border-bottom:1px solid #e2e8f0"></div>
<div class="a nw" style="left:706px;top:180.5px;font-size:12px;line-height:17px;color:#1e293b;font-weight:bold">診療詳細記入</div>
<div class="a" style="left:854px;top:177px;width:55px;height:24px;background:#93b4f3;border-radius:4px;color:#fff;font-size:11.5px;line-height:24px;text-align:center;font-weight:bold"><span style="font-weight:normal;font-size:13px;margin-right:5px">+</span>新規</div>
<div class="a" style="left:698px;top:207.5px;width:219px;height:55px;background:#eff6ff;border-left:3px solid #3b82f6;border-radius:0 0 0 3px"></div>
<div class="a nw" style="left:708px;top:216.5px;font-size:11.5px;line-height:16px;color:#475569">4/2 16:49</div>
<div class="a" style="left:865px;top:216.5px;width:42px;height:17.5px;background:#fef3c7;border-radius:9px;color:#92400e;font-size:10.5px;line-height:17.5px;text-align:center">下書き</div>
<div class="a nw" style="left:708px;top:236px;width:200px;overflow:hidden;text-overflow:ellipsis;font-size:11px;line-height:16px;color:#94a3b8">【主訴】階段上り時や夜間、運動時に咳が起き</div>
<!-- detail -->
<div class="a" style="left:918px;top:171px;width:962px;height:28px;background:#f8fafc;border-bottom:1px solid #e2e8f0"></div>
<div class="a nw" style="left:926px;top:176.5px;font-size:12.5px;line-height:18px;color:#334155">4/2 16:49</div>
<div class="a" style="left:984px;top:177px;width:42px;height:17px;background:#fef3c7;border-radius:9px;color:#92400e;font-size:10.5px;line-height:17px;text-align:center">下書き</div>
<div class="a nw" style="left:1032px;top:176.5px;font-size:12.5px;line-height:18px;color:#64748b">admin</div>
<div class="a" style="left:930px;top:207.5px;width:940px;font-size:13px;line-height:20.8px;color:#1e293b;-webkit-text-stroke:.2px #1e293b"><b style="-webkit-text-stroke:0">【主訴】</b>階段上り時や夜間、運動時に咳が起き、痰が絡む。熱はない。<br><b style="-webkit-text-stroke:0">【要約】</b>患者は階段上り時や夜間、運動時に咳が起き、痰が絡む。熱はない。既往歴として気管支喘息の悪化歴あり。医師は気道細化と炎症を確認し、呼吸機能検査で数値低下、喘息発作の状態と診断。風邪によるウイルス感染が引き金と推察。治療として吸入薬（レディペア）の容量増量（100mg→200mg）と内服薬（プレトニン）の追加を指示。吸入法指導（吸って、吐いて、背中も効きますね）を実施。症状改善を期待し、1週間後の木曜日（2026-03-26）に受診予約。咳がひどくなる場合は早急受診または電話対応を案内。</div>

</body></html>
